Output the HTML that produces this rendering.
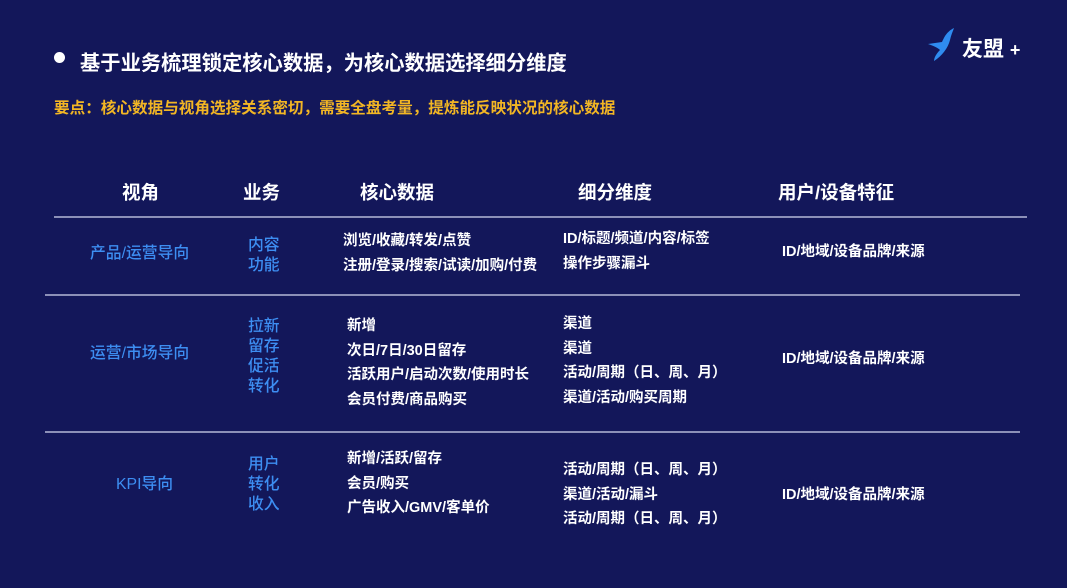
<!DOCTYPE html><html><head><meta charset="utf-8"><style>
body{margin:0;width:1067px;height:588px;background:#13175a;overflow:hidden;position:relative;font-family:"Liberation Sans","Noto Sans CJK SC",sans-serif;color:#fff}
.a{position:absolute;white-space:nowrap}
.b{color:#3d8ef2;font-weight:500}
.h{font-size:18.5px;font-weight:bold;color:#fff}
.t{font-size:14.5px;font-weight:bold}
.line{position:absolute;height:2px;background:#8c90b8}
</style></head><body>
<div class="a" style="left:54px;top:52px;width:11px;height:11px;border-radius:50%;background:#fff"></div>
<div class="a" style="left:80px;top:46px;font-size:20.3px;font-weight:bold">基于业务梳理锁定核心数据，为核心数据选择细分维度</div>
<div class="a" style="left:54px;top:96px;font-size:15.6px;font-weight:bold;color:#f2b624">要点：核心数据与视角选择关系密切，需要全盘考量，提炼能反映状况的核心数据</div>
<svg class="a" style="left:924px;top:26px" width="34" height="36" viewBox="0 0 34 36"><path d="M30 2 C22 6 20 12 18 16 L4 18 C10 20 14 22 16 24 C12 28 10 32 10 35 C18 30 24 22 26 14 C27 9 29 5 30 2Z" fill="#2f8cf0"/></svg>
<div class="a" style="left:962px;top:33px;font-size:21px;font-weight:bold">友盟 <span style="font-size:18px">+</span></div>
<div class="a h" style="left:122px;top:179px">视角</div>
<div class="a h" style="left:243px;top:179px">业务</div>
<div class="a h" style="left:360px;top:179px">核心数据</div>
<div class="a h" style="left:578px;top:179px">细分维度</div>
<div class="a h" style="left:778px;top:179px">用户/设备特征</div>
<div class="line" style="left:54px;top:216px;width:973px"></div>
<div class="line" style="left:45px;top:294px;width:975px"></div>
<div class="line" style="left:45px;top:431px;width:975px"></div>
<div class="a b" style="left:90px;top:240px;font-size:15.8px">产品/运营导向</div>
<div class="a b" style="left:248px;top:236px;font-size:15.8px;line-height:20px">内容<br>功能</div>
<div class="a t" style="left:343px;top:229px;line-height:25px">浏览/收藏/转发/点赞<br>注册/登录/搜索/试读/加购/付费</div>
<div class="a t" style="left:563px;top:227px;line-height:25px">ID/标题/频道/内容/标签<br>操作步骤漏斗</div>
<div class="a t" style="left:782px;top:240px">ID/地域/设备品牌/来源</div>
<div class="a b" style="left:90px;top:340px;font-size:15.8px">运营/市场导向</div>
<div class="a b" style="left:248px;top:317px;font-size:15.8px;line-height:20px">拉新<br>留存<br>促活<br>转化</div>
<div class="a t" style="left:347px;top:314px;line-height:24.5px">新增<br>次日/7日/30日留存<br>活跃用户/启动次数/使用时长<br>会员付费/商品购买</div>
<div class="a t" style="left:563px;top:312px;line-height:24.5px">渠道<br>渠道<br>活动/周期（日、周、月）<br>渠道/活动/购买周期</div>
<div class="a t" style="left:782px;top:347px">ID/地域/设备品牌/来源</div>
<div class="a b" style="left:116px;top:471px;font-size:15.8px">KPI导向</div>
<div class="a b" style="left:248px;top:455px;font-size:15.8px;line-height:20px">用户<br>转化<br>收入</div>
<div class="a t" style="left:347px;top:447px;line-height:24.5px">新增/活跃/留存<br>会员/购买<br>广告收入/GMV/客单价</div>
<div class="a t" style="left:563px;top:458px;line-height:24.5px">活动/周期（日、周、月）<br>渠道/活动/漏斗<br>活动/周期（日、周、月）</div>
<div class="a t" style="left:782px;top:483px">ID/地域/设备品牌/来源</div>
</body></html>
